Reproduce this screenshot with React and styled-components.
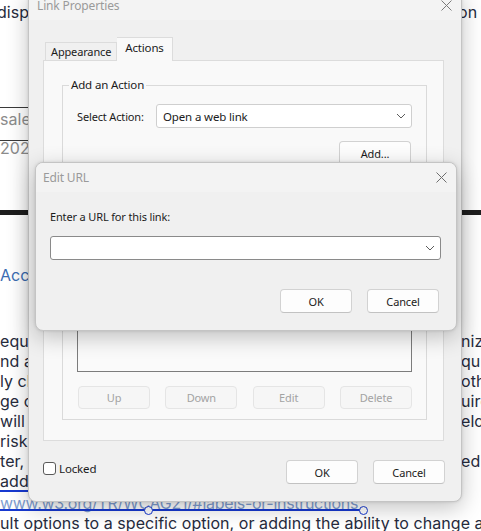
import React from "react"
import styled, {createGlobalStyle} from "styled-components"

const GlobalStyle = createGlobalStyle`
    html, body {
        margin: 0;
        padding: 0;
        background: #fff;
    }
    body {
        width: 481px;
        height: 531px;
        overflow: hidden;
    }
`

const ui = `"Noto Sans", "Open Sans", sans-serif`

// ---------- the document behind the dialogs ----------

const Page = styled.div`
    position: relative;
    width: 481px;
    height: 531px;
    overflow: hidden;
    background: #fff;
`

const Doc = styled.div`
    display: flex;
    flex-direction: column;
    padding-top: 2px;
    font-family: "Inter", "Open Sans", sans-serif;
    font-size: 16px;
    letter-spacing: 0.05px;
    color: #262b3d;
`

const Line = styled.div`
    display: grid;
    grid-template-columns: 461px 1fr;
    height: 20px;
    line-height: 20px;
    white-space: nowrap;
    margin-top: ${p => p.$mt || 0}px;
    color: ${p => p.$color || "inherit"};

    & > span {
        overflow: hidden;
    }
`

const Table = styled.div`
    width: 300px;
    margin-top: 85px;
    border-top: 1px solid #3a3a3a;
    color: #8b8b8b;
`

const Cell = styled.div`
    height: ${p => p.$h}px;
    line-height: ${p => p.$lh}px;
    border-bottom: ${p => p.$border ? "1px solid #3a3a3a" : "none"};
    white-space: nowrap;
`

const Rule = styled.div`
    height: 5px;
    margin-top: 53px;
    background: #1e1e1e;
`

const LinkText = styled.div`
    height: 20px;
    line-height: 20px;
    margin-top: 2px;
    color: #7f9dd0;
    letter-spacing: -0.3px;
    text-decoration: underline;
    white-space: nowrap;
`

const Selection = styled.div`
    position: absolute;
    left: -66px;
    top: 490px;
    width: 429px;
    height: 17px;
    border-top: 2px solid #1739d0;
    border-bottom: 2px solid #1739d0;
`

const Handle = styled.span`
    position: absolute;
    bottom: -6px;
    left: ${p => p.$left};
    width: 7px;
    height: 7px;
    margin-left: -5px;
    border: 1.5px solid #1739d0;
    border-radius: 50%;
    background: #fff;
`

// ---------- dialog windows ----------

const Window = styled.div`
    position: absolute;
    left: ${p => p.$x}px;
    top: ${p => p.$y}px;
    width: ${p => p.$w}px;
    height: ${p => p.$h}px;
    box-sizing: border-box;
    display: flex;
    flex-direction: column;
    background: #f0f0f0;
    border: 1px solid #c4c4c4;
    border-radius: 8px;
    box-shadow: 0 6px 22px rgba(0, 0, 0, 0.24), 0 0 3px rgba(0, 0, 0, 0.12);
    overflow: hidden;
    font-family: ${ui};
    font-size: 11px;
    letter-spacing: -0.15px;
    color: #1b1b1b;
`

const TitleBar = styled.div`
    flex: none;
    height: 29px;
    display: flex;
    align-items: center;
    justify-content: space-between;
    padding-left: 7px;
    background: #f3f3f3;
    color: #9a9a9a;
    font-size: 12px;
`

const CloseBox = styled.div`
    width: 30px;
    height: 29px;
    display: flex;
    align-items: center;
    justify-content: center;
`

const Body = styled.div`
    flex: 1;
    display: flex;
    flex-direction: column;
    padding: ${p => p.$pad};
`

const Button = styled.button`
    width: 72px;
    height: 24px;
    box-sizing: border-box;
    border: 1px solid ${p => p.disabled ? "#e5e5e5" : "#d2d2d2"};
    border-bottom-color: ${p => p.disabled ? "#e5e5e5" : "#c2c2c2"};
    border-radius: 4px;
    background: ${p => p.disabled ? "#f6f6f6" : "#fdfdfd"};
    color: ${p => p.disabled ? "#a3a3a3" : "#1b1b1b"};
    font-family: ${ui};
    font-size: 11px;
    letter-spacing: -0.15px;
    padding: 0;
`

const ButtonRow = styled.div`
    display: flex;
    justify-content: flex-end;
    gap: 15px;
    margin-top: ${p => p.$mt}px;
    padding-right: ${p => p.$pr || 0}px;
`

// tabs

const TabList = styled.div`
    display: flex;
    align-items: flex-end;
    padding-left: 2px;
    height: 23px;
`

const Tab = styled.div`
    height: ${p => p.$active ? 24 : 18}px;
    box-sizing: border-box;
    margin-bottom: ${p => p.$active ? -1 : 0}px;
    padding: ${p => p.$active ? "0 8px 4px" : "0 5px"};
    display: flex;
    align-items: center;
    border: 1px solid #dcdcdc;
    border-bottom: none;
    border-left-width: ${p => p.$active ? 0 : 1}px;
    background: ${p => p.$active ? "#f9f9f9" : "#f0f0f0"};
    position: relative;
    z-index: ${p => p.$active ? 1 : 0};
    font-size: ${p => p.$active ? 11.5 : 11}px;
`

const Panel = styled.div`
    height: 381px;
    box-sizing: border-box;
    border: 1px solid #dcdcdc;
    background: #f9f9f9;
    padding: 24px 16px 0 18px;
`

const Group = styled.div`
    position: relative;
    display: flex;
    flex-direction: column;
    height: 335px;
    box-sizing: border-box;
    border: 1px solid #dadada;
    padding: 18px 14px 0 14px;
`

const Legend = styled.span`
    position: absolute;
    top: -9px;
    left: 6px;
    padding: 0 2px;
    background: #f9f9f9;
    font-size: 11.5px;
`

const FieldRow = styled.div`
    display: flex;
    align-items: center;
    margin-top: ${p => p.$mt || 0}px;
`

const Label = styled.span`
    width: 79px;
    flex: none;
`

const Combo = styled.div`
    flex: 1;
    height: 24px;
    box-sizing: border-box;
    display: flex;
    align-items: center;
    justify-content: space-between;
    padding: 0 5px 0 6px;
    background: #fff;
    border: 1px solid ${p => p.$dark ? "#8a8a8a" : "#cfcfcf"};
    border-radius: 3px;
    font-size: 11.5px;
`

const ListBox = styled.div`
    height: 187px;
    margin-top: 20px;
    box-sizing: border-box;
    border: 1px solid #7c7c7c;
    background: #fafafa;
`

const ActionButtons = styled.div`
    display: flex;
    justify-content: space-between;
    margin-top: 14px;
    padding-left: 1px;

    & > button {
        height: 23px;
    }
`

const Footer = styled.div`
    display: flex;
    justify-content: space-between;
    align-items: flex-start;
    margin-top: 19px;
    margin-right: -1px;
`

const CheckRow = styled.label`
    display: flex;
    align-items: center;
    gap: 3px;
    margin-top: 1px;
    font-size: 11.5px;
`

const CheckBox = styled.span`
    width: 13px;
    height: 13px;
    box-sizing: border-box;
    border: 1px solid #5a5a5a;
    border-radius: 3px;
    background: #fff;
`

const FieldLabel = styled.div`
    height: 15px;
    line-height: 15px;
`

const Chevron = () => (
    <svg width="10" height="6" viewBox="0 0 10 6">
        <path d="M1 1l4 4 4-4" fill="none" stroke="#5c5c5c" strokeWidth="1" />
    </svg>
)

const CloseIcon = ({color}) => (
    <svg width="11" height="11" viewBox="0 0 11 11">
        <path d="M0.5 0.5l10 10M10.5 0.5l-10 10" stroke={color} strokeWidth="1" />
    </svg>
)

const paragraph = [
    ["equire that every form field is labelled clearly", "niz"],
    ["nd a validation message appears beside each", "qu"],
    ["ly change the default behaviour of the", "oth"],
    ["ge change of context unless the user is", "uire"],
    [" will be warned in advance of the change", "eld'"],
    ["risk.' The control is marked as required", ""],
    ["ter, the list can be customised by", "ed"],
    ["adding a new option to the control", ""],
]

export default function App() {
    return (
        <Page>
            <GlobalStyle />
            <Doc>
                <Line style={{marginLeft: -3}}>
                    <span>displayed on the page in the correct location</span>
                    <span>on</span>
                </Line>
                <Table>
                    <Cell $h={32} $lh={22} $border>sales and reporting</Cell>
                    <Cell $h={16} $lh={15}>2022</Cell>
                </Table>
                <Rule />
                <Line $mt={50} $color="#3b6db3"><span>Accessibility notes</span><span /></Line>
                {paragraph.map(([left, right], i) => (
                    <Line key={i} $mt={i === 0 ? 46 : 0}>
                        <span>{left}</span>
                        <span>{right}</span>
                    </Line>
                ))}
                <LinkText>www.w3.org/TR/WCAG21/#labels-or-instructions</LinkText>
                <Line>
                    <span style={{overflow: "visible"}}>ult options to a specific option, or adding the ability to change a</span>
                    <span />
                </Line>
            </Doc>
            <Selection>
                <Handle $left="50%" />
                <Handle $left="calc(100% + 1px)" />
            </Selection>

            <Window $x={28} $y={-10} $w={434} $h={512}>
                <TitleBar>
                    <span style={{paddingLeft: 1}}>Link Properties</span>
                    <CloseBox><CloseIcon color="#7a7a7a" /></CloseBox>
                </TitleBar>
                <Body $pad="17px 17px 0 14px">
                    <TabList>
                        <Tab>Appearance</Tab>
                        <Tab $active>Actions</Tab>
                    </TabList>
                    <Panel>
                        <Group>
                            <Legend>Add an Action</Legend>
                            <FieldRow>
                                <Label>Select Action:</Label>
                                <Combo>
                                    <span>Open a web link</span>
                                    <Chevron />
                                </Combo>
                            </FieldRow>
                            <ButtonRow $mt={13} $pr={1}>
                                <Button>Add...</Button>
                            </ButtonRow>
                            <ListBox />
                            <ActionButtons>
                                <Button disabled>Up</Button>
                                <Button disabled>Down</Button>
                                <Button disabled>Edit</Button>
                                <Button disabled>Delete</Button>
                            </ActionButtons>
                        </Group>
                    </Panel>
                    <Footer>
                        <CheckRow>
                            <CheckBox />
                            Locked
                        </CheckRow>
                        <ButtonRow $mt={0}>
                            <Button>OK</Button>
                            <Button>Cancel</Button>
                        </ButtonRow>
                    </Footer>
                </Body>
            </Window>

            <Window $x={35} $y={162} $w={422} $h={169}>
                <TitleBar>
                    <span>Edit URL</span>
                    <CloseBox><CloseIcon color="#6e6e6e" /></CloseBox>
                </TitleBar>
                <Body $pad="17px 15px 0 14px">
                    <FieldLabel>Enter a URL for this link:</FieldLabel>
                    <FieldRow $mt={12}>
                        <Combo $dark>
                            <span />
                            <Chevron />
                        </Combo>
                    </FieldRow>
                    <ButtonRow $mt={29} $pr={2}>
                        <Button>OK</Button>
                        <Button>Cancel</Button>
                    </ButtonRow>
                </Body>
            </Window>
        </Page>
    )
}
